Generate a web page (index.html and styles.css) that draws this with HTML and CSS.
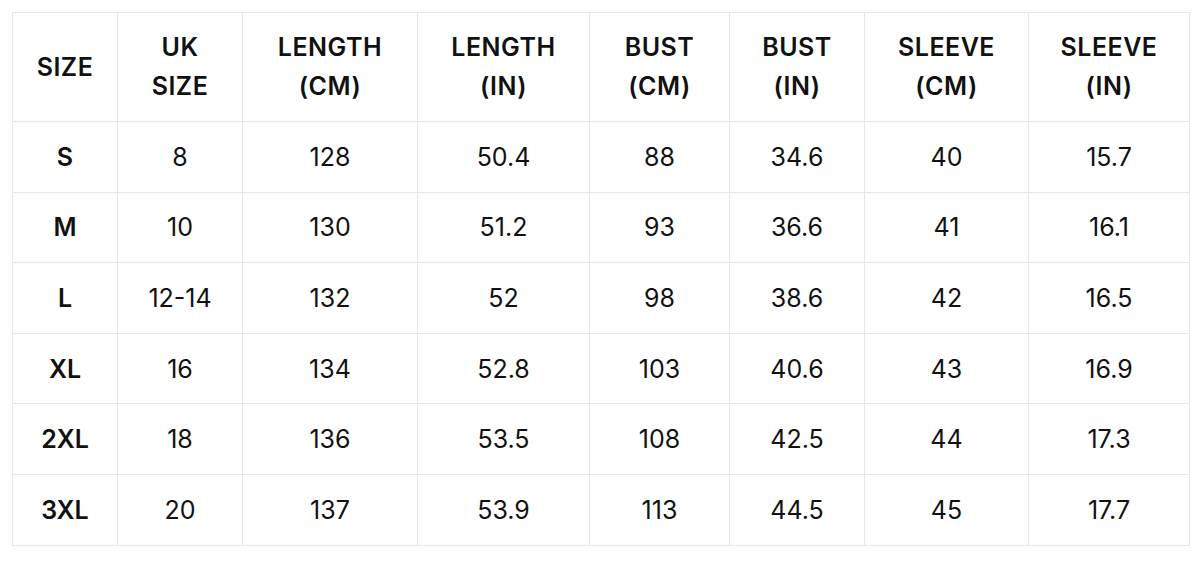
FILE: index.html
```html
<!DOCTYPE html>
<html lang="en">
<head>
<meta charset="utf-8">
<title>Size chart</title>
<link rel="stylesheet" href="styles.css">
</head>
<body>
<table class="size-chart">
  <colgroup>
    <col class="c1"><col class="c2"><col class="c3"><col class="c4">
    <col class="c5"><col class="c6"><col class="c7"><col class="c8">
  </colgroup>
  <thead>
    <tr>
      <th>SIZE</th>
      <th>UK<br>SIZE</th>
      <th>LENGTH<br>(CM)</th>
      <th>LENGTH<br>(IN)</th>
      <th>BUST<br>(CM)</th>
      <th>BUST<br>(IN)</th>
      <th>SLEEVE<br>(CM)</th>
      <th>SLEEVE<br>(IN)</th>
    </tr>
  </thead>
  <tbody>
    <tr><th>S</th><td>8</td><td>128</td><td>50.4</td><td>88</td><td>34.6</td><td>40</td><td>15.7</td></tr>
    <tr><th>M</th><td>10</td><td>130</td><td>51.2</td><td>93</td><td>36.6</td><td>41</td><td>16.1</td></tr>
    <tr><th>L</th><td>12-14</td><td>132</td><td>52</td><td>98</td><td>38.6</td><td>42</td><td>16.5</td></tr>
    <tr><th>XL</th><td>16</td><td>134</td><td>52.8</td><td>103</td><td>40.6</td><td>43</td><td>16.9</td></tr>
    <tr><th>2XL</th><td>18</td><td>136</td><td>53.5</td><td>108</td><td>42.5</td><td>44</td><td>17.3</td></tr>
    <tr><th>3XL</th><td>20</td><td>137</td><td>53.9</td><td>113</td><td>44.5</td><td>45</td><td>17.7</td></tr>
  </tbody>
</table>
</body>
</html>
```

FILE: styles.css
```css
html, body {
  margin: 0;
  padding: 0;
  background: #ffffff;
}

body {
  padding: 12px 0 0 12px;
  font-family: "Inter", "Liberation Sans", sans-serif;
  color: #111111;
}

.size-chart {
  border-collapse: collapse;
  table-layout: fixed;
  width: 1177px;
}

.c1 { width: 105px; }
.c2 { width: 125px; }
.c3 { width: 175px; }
.c4 { width: 172px; }
.c5 { width: 140px; }
.c6 { width: 135px; }
.c7 { width: 164px; }
.c8 { width: 161px; }

.size-chart th,
.size-chart td {
  border: 1px solid #e6e6e6;
  text-align: center;
  vertical-align: middle;
  padding: 0;
}

.size-chart thead th {
  height: 108px;
  font-size: 25px;
  font-weight: 600;
  line-height: 39px;
  letter-spacing: 0.5px;
}

.size-chart tbody th,
.size-chart tbody td {
  height: 69.6px;
  font-size: 25px;
  line-height: 30px;
}

.size-chart tbody th {
  font-weight: 600;
}

.size-chart tbody td {
  font-weight: 400;
}
```
